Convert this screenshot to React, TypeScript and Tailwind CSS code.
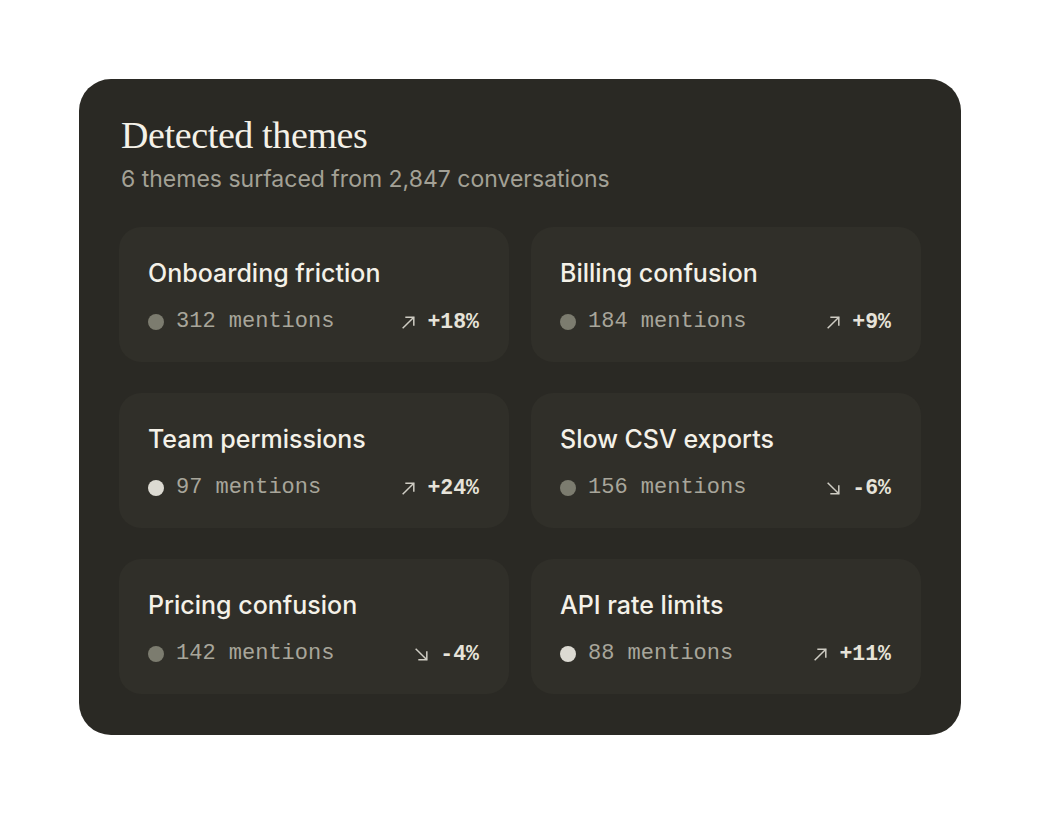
const themes = [
  { name: 'Onboarding friction', mentions: 312, change: '+18%', up: true, hot: false },
  { name: 'Billing confusion', mentions: 184, change: '+9%', up: true, hot: false },
  { name: 'Team permissions', mentions: 97, change: '+24%', up: true, hot: true },
  { name: 'Slow CSV exports', mentions: 156, change: '-6%', up: false, hot: false },
  { name: 'Pricing confusion', mentions: 142, change: '-4%', up: false, hot: false },
  { name: 'API rate limits', mentions: 88, change: '+11%', up: true, hot: true },
];

function TrendArrow({ up }: { up: boolean }) {
  return (
    <svg width="17" height="17" viewBox="0 0 16 16" fill="none" stroke="currentColor" strokeWidth="1.4" className="text-[#cfcdc4]">
      {up ? (
        <>
          <path d="M2.5 13.5L13 3" />
          <path d="M5 3h8v8" />
        </>
      ) : (
        <>
          <path d="M2.5 2.5L13 13" />
          <path d="M13 5v8H5" />
        </>
      )}
    </svg>
  );
}

export default function App() {
  return (
    <div className="min-h-[814px] w-full bg-white px-[79px] pt-[79px]">
      <section className="w-[882px] rounded-[32px] bg-[#2a2924] px-10 pb-[41px] pt-[36px]">
        <h2 className="ml-[2px] text-[38px] leading-[40px] tracking-[-0.01em] text-[#f4f1e8] font-['Liberation_Serif',serif]">
          Detected themes
        </h2>
        <p className="ml-[2px] mt-[8px] text-[23px] leading-[32px] text-[#a3a196] font-['Inter',sans-serif]">
          6 themes surfaced from 2,847 conversations
        </p>

        <div className="mt-[32px] grid grid-cols-2 gap-x-[22px] gap-y-[31px]">
          {themes.map((t) => (
            <article key={t.name} className="h-[135px] rounded-[22px] bg-[#302f29] px-[29px] pt-[30px]">
              <h3 className="text-[25px] leading-[32px] font-medium text-[#f4f1e8] font-['Inter',sans-serif]">
                {t.name}
              </h3>
              <div className="mt-[19px] flex items-center justify-between pr-px">
                <div className="flex items-center gap-[12px]">
                  <span className={`h-[16px] w-[16px] rounded-full ${t.hot ? 'bg-[#dcdad2]' : 'bg-[#7c7c6f]'}`} />
                  <span className="text-[22px] leading-[28px] text-[#a8a69b] font-['Liberation_Mono',monospace]">
                    {t.mentions} mentions
                  </span>
                </div>
                <div className="flex items-center gap-[10px]">
                  <TrendArrow up={t.up} />
                  <span className="text-[21.5px] leading-[28px] font-bold text-[#e6e3d9] font-['Liberation_Mono',monospace]">
                    {t.change}
                  </span>
                </div>
              </div>
            </article>
          ))}
        </div>
      </section>
    </div>
  );
}
